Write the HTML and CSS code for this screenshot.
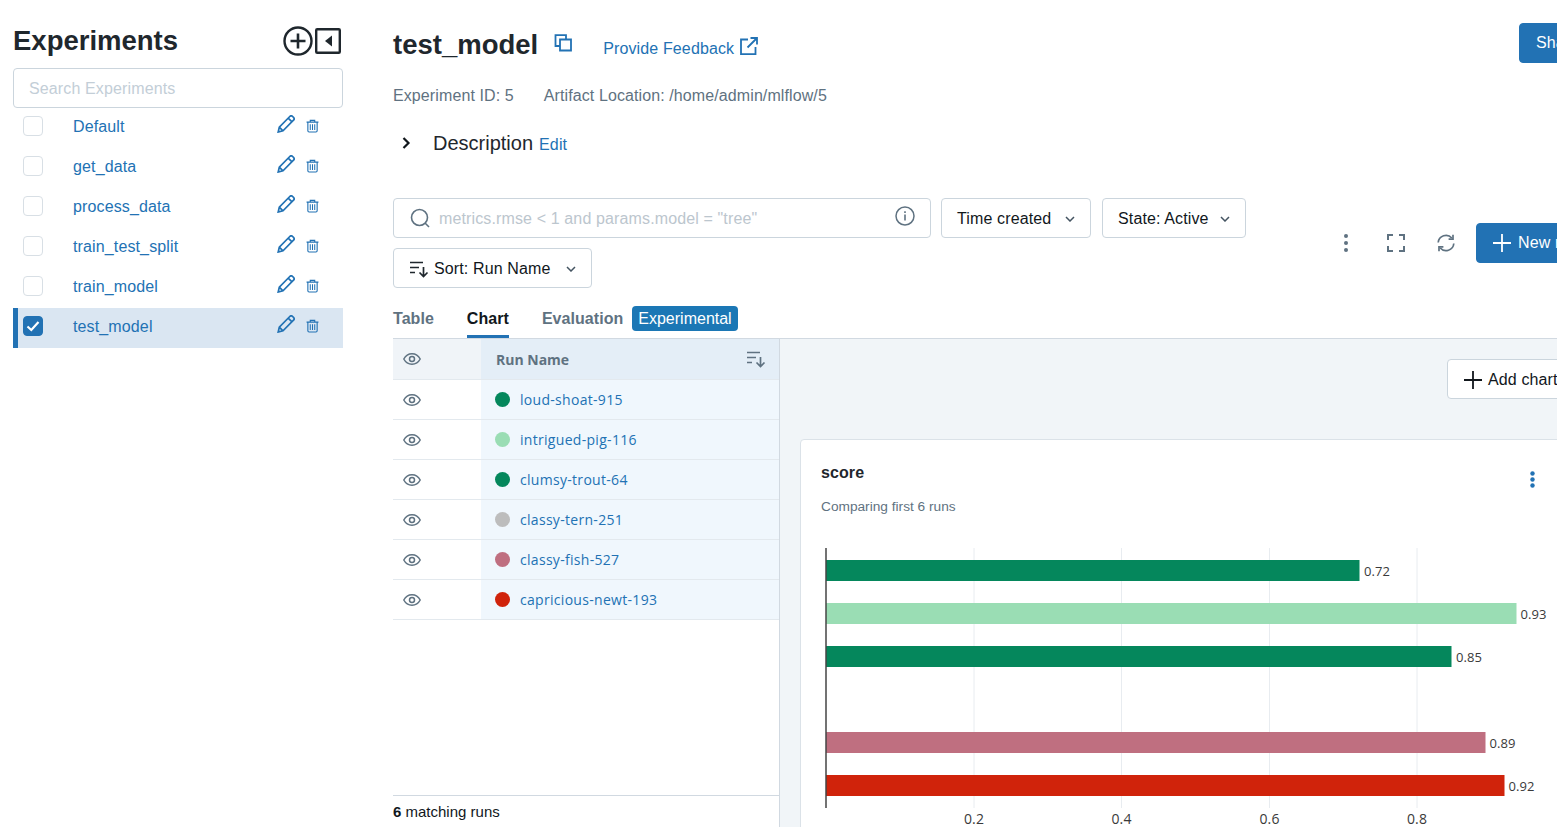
FILE: index.html
```html
<!DOCTYPE html>
<html lang="en">
  <head>
    <meta charset="UTF-8" />
    <meta name="viewport" content="width=device-width, initial-scale=1.0" />
    <title>test_model - MLflow</title>
    <link rel="stylesheet" href="styles.css">
  </head>
  <body>
    <svg class="sprites" width="0" height="0">
      <symbol id="pencil" viewBox="0 0 18 18"><path d="M12.8 1.5a2 2 0 0 1 2.800 0l.9.9a2 2 0 0 1 0 2.800L6 15.800 1.200 17l1.100-4.900zM11.200 3.200l3.800 3.700M2.300 12.200l3.700 3.600" fill="none" stroke="currentColor" stroke-width="1.700"/></symbol>
      <symbol id="trash" viewBox="0 0 14 14"><path d="M.6 2.8h12.8M4.6 2.6V.9h4.8v1.7M2 2.8v9.3a1.3 1.3 0 0 0 1.3 1.3h7.4a1.3 1.3 0 0 0 1.3-1.3V2.8" fill="none" stroke="currentColor" stroke-width="1.2"/><path d="M4.6 5v6.4M7 5v6.4M9.4 5v6.4" stroke="currentColor" stroke-width="1.1"/></symbol>
      <symbol id="eye" viewBox="0 0 18 12"><path d="M.8 6C2.6 2.6 5.500.8 9 .8s6.400 1.800 8.200 5.200c-1.800 3.400-4.700 5.200-8.200 5.200S2.600 9.400.8 6z" fill="none" stroke="currentColor" stroke-width="1.500"/><circle cx="9" cy="6" r="2.500" fill="none" stroke="currentColor" stroke-width="1.500"/></symbol>
      <symbol id="sort" viewBox="0 0 20 18"><path d="M1 2.500h13M1 7.500h9M1 12.500h5M14.500 7v9.500M10.500 12.500l4 4 4-4" fill="none" stroke="currentColor" stroke-width="1.700"/></symbol>
      <symbol id="chevron" viewBox="0 0 10 6"><path d="M1 1l4 4 4-4" fill="none" stroke="currentColor" stroke-width="1.500"/></symbol>
      <symbol id="plus" viewBox="0 0 18 18"><path d="M9 0v18M0 9h18" stroke="currentColor" stroke-width="1.800"/></symbol>
    </svg>

    <aside class="sidebar">
      <div class="sidebar-head">
        <h1 class="sidebar-title">Experiments</h1>
        <div class="sidebar-tools">
          <svg class="tool-icon" width="30" height="30" viewBox="0 0 30 30"><circle cx="15" cy="15" r="13.500" fill="none" stroke="currentColor" stroke-width="2.400"/><path d="M15 7.500v15M7.500 15h15" stroke="currentColor" stroke-width="2.600"/></svg>
          <svg class="tool-icon" width="26" height="26" viewBox="0 0 26 26"><rect x="1.200" y="1.200" width="23.600" height="23.600" rx="1" fill="none" stroke="currentColor" stroke-width="2.400"/><path d="M17 7.500v11L10 13z" fill="currentColor"/></svg>
        </div>
      </div>
      <input class="sidebar-search" type="text" placeholder="Search Experiments">
      <ul class="experiments">
        <li class="experiment">
          <span class="check"></span><a class="experiment-name">Default</a>
          <svg class="pencil"><use href="#pencil"/></svg><svg class="trash"><use href="#trash"/></svg>
        </li>
        <li class="experiment">
          <span class="check"></span><a class="experiment-name">get_data</a>
          <svg class="pencil"><use href="#pencil"/></svg><svg class="trash"><use href="#trash"/></svg>
        </li>
        <li class="experiment">
          <span class="check"></span><a class="experiment-name">process_data</a>
          <svg class="pencil"><use href="#pencil"/></svg><svg class="trash"><use href="#trash"/></svg>
        </li>
        <li class="experiment">
          <span class="check"></span><a class="experiment-name">train_test_split</a>
          <svg class="pencil"><use href="#pencil"/></svg><svg class="trash"><use href="#trash"/></svg>
        </li>
        <li class="experiment">
          <span class="check"></span><a class="experiment-name">train_model</a>
          <svg class="pencil"><use href="#pencil"/></svg><svg class="trash"><use href="#trash"/></svg>
        </li>
        <li class="experiment selected">
          <span class="check checked"><svg width="14" height="12" viewBox="0 0 14 12"><path d="M1.500 6.500l3.800 3.500 7.200-8" fill="none" stroke="#fff" stroke-width="2.200"/></svg></span><a class="experiment-name">test_model</a>
          <svg class="pencil"><use href="#pencil"/></svg><svg class="trash"><use href="#trash"/></svg>
        </li>
      </ul>
    </aside>

    <main class="main">
      <header class="page-head">
        <h2 class="page-title">test_model</h2>
        <svg class="copy-icon" width="18" height="18" viewBox="0 0 18 18"><path d="M6 5.500h11v11H6z M12 5V1.200H1.500V12H6" fill="none" stroke="currentColor" stroke-width="1.800"/></svg>
        <a class="feedback">Provide Feedback</a>
        <svg class="external-icon" width="18" height="18" viewBox="0 0 18 18"><path d="M8 2.500H1v14.600h14.500V10M10.500 1H17v6.500M17 1L7.500 10.500" fill="none" stroke="currentColor" stroke-width="1.800"/></svg>
        <button class="primary share">Share</button>
      </header>

      <div class="meta">
        <span>Experiment ID: 5</span>
        <span>Artifact Location: /home/admin/mlflow/5</span>
      </div>

      <div class="description">
        <svg class="desc-chevron" width="9" height="12" viewBox="0 0 9 12"><path d="M1.500 1l5 5-5 5" fill="none" stroke="currentColor" stroke-width="2.200"/></svg>
        <span class="desc-label">Description</span>
        <a class="desc-edit">Edit</a>
      </div>

      <section class="toolbar">
        <div class="filters">
          <div class="run-search">
            <svg class="search-icon" width="20" height="20" viewBox="0 0 20 20"><circle cx="9.500" cy="9.500" r="8" fill="none" stroke="currentColor" stroke-width="1.600"/><path d="M15 15l4 4" stroke="currentColor" stroke-width="1.600"/></svg>
            <span class="run-search-text">metrics.rmse &lt; 1 and params.model = "tree"</span>
            <svg class="info-icon" width="20" height="20" viewBox="0 0 20 20"><circle cx="10" cy="10" r="9" fill="none" stroke="currentColor" stroke-width="1.500"/><path d="M10 8.500v6M10 5.200v1.800" stroke="currentColor" stroke-width="1.600"/></svg>
          </div>
          <button class="select time-select">Time created<svg class="chevron"><use href="#chevron"/></svg></button>
          <button class="select state-select">State: Active<svg class="chevron"><use href="#chevron"/></svg></button>
          <button class="select sort-select"><svg class="sort-icon dark"><use href="#sort"/></svg>Sort: Run Name<svg class="chevron"><use href="#chevron"/></svg></button>
        </div>
        <div class="view-tools">
          <svg class="kebab" width="4" height="18" viewBox="0 0 4 18"><circle cx="2" cy="2" r="2"/><circle cx="2" cy="9" r="2"/><circle cx="2" cy="16" r="2"/></svg>
          <svg class="view-icon" width="18" height="18" viewBox="0 0 18 18"><path d="M6 1H1v5M12 1h5v5M6 17H1v-5M12 17h5v-5" fill="none" stroke="currentColor" stroke-width="2"/></svg>
          <svg class="view-icon" width="18" height="18" viewBox="0 0 18 18"><path d="M1.200 8.500A7.800 7.800 0 0 1 14.800 4M16.800 9.500A7.800 7.800 0 0 1 3.200 14" fill="none" stroke="currentColor" stroke-width="1.700"/><path d="M16 .8v4.400h-4.400M2 17.200v-4.400h4.400" fill="none" stroke="currentColor" stroke-width="1.700"/></svg>
          <button class="primary new-run"><svg class="plus"><use href="#plus"/></svg>New run</button>
        </div>
      </section>

      <nav class="tabs">
        <a class="tab">Table</a>
        <a class="tab active">Chart</a>
        <a class="tab">Evaluation</a>
        <span class="badge">Experimental</span>
      </nav>

      <section class="compare">
        <div class="runs">
          <div class="run-row run-head">
            <div class="eye-cell"><svg class="eye"><use href="#eye"/></svg></div>
            <div class="name-cell">
              <span class="run-head-label">Run Name</span>
              <svg class="sort-icon"><use href="#sort"/></svg>
            </div>
          </div>
          <div class="run-row">
            <div class="eye-cell"><svg class="eye"><use href="#eye"/></svg></div>
            <div class="name-cell"><span class="dot dot-green"></span><a class="run-link">loud-shoat-915</a></div>
          </div>
          <div class="run-row">
            <div class="eye-cell"><svg class="eye"><use href="#eye"/></svg></div>
            <div class="name-cell"><span class="dot dot-mint"></span><a class="run-link">intrigued-pig-116</a></div>
          </div>
          <div class="run-row">
            <div class="eye-cell"><svg class="eye"><use href="#eye"/></svg></div>
            <div class="name-cell"><span class="dot dot-green"></span><a class="run-link">clumsy-trout-64</a></div>
          </div>
          <div class="run-row">
            <div class="eye-cell"><svg class="eye"><use href="#eye"/></svg></div>
            <div class="name-cell"><span class="dot dot-grey"></span><a class="run-link">classy-tern-251</a></div>
          </div>
          <div class="run-row">
            <div class="eye-cell"><svg class="eye"><use href="#eye"/></svg></div>
            <div class="name-cell"><span class="dot dot-rose"></span><a class="run-link">classy-fish-527</a></div>
          </div>
          <div class="run-row">
            <div class="eye-cell"><svg class="eye"><use href="#eye"/></svg></div>
            <div class="name-cell"><span class="dot dot-red"></span><a class="run-link">capricious-newt-193</a></div>
          </div>
          <div class="runs-foot"><b>6</b> matching runs</div>
        </div>

        <div class="charts">
          <div class="charts-bar">
            <button class="select add-chart"><svg class="plus"><use href="#plus"/></svg>Add chart</button>
          </div>
          <article class="card">
            <div class="card-head">
              <h3 class="card-title">score</h3>
              <svg class="card-kebab" width="5" height="17" viewBox="0 0 5 17"><circle cx="2.500" cy="2.500" r="2.200"/><circle cx="2.500" cy="8.500" r="2.200"/><circle cx="2.500" cy="14.500" r="2.200"/></svg>
            </div>
            <p class="card-note">Comparing first 6 runs</p>
            <svg class="plot" width="760" height="300" viewBox="0 0 760 300">
              <g class="grid">
                <path d="M153 8v260M300.500 8v260M448.500 8v260M596 8v260"/>
              </g>
              <rect x="5" y="20" width="533.500" height="21" fill="#05875c"/>
              <rect x="5" y="63" width="690.500" height="21" fill="#9addb4"/>
              <rect x="5" y="106" width="625.500" height="21" fill="#05875c"/>
              <rect x="5" y="192" width="659.500" height="21" fill="#bf6f80"/>
              <rect x="5" y="235" width="678.500" height="21" fill="#d0230b"/>
              <path class="axis" d="M5 8v260"/>
              <g class="bar-labels">
                <text x="543" y="36">0.72</text>
                <text x="699.500" y="79">0.93</text>
                <text x="635" y="122">0.85</text>
                <text x="668.500" y="208">0.89</text>
                <text x="687.500" y="251">0.92</text>
              </g>
              <g class="tick-labels">
                <text x="153" y="284">0.2</text>
                <text x="300.500" y="284">0.4</text>
                <text x="448.500" y="284">0.6</text>
                <text x="596" y="284">0.8</text>
              </g>
            </svg>
          </article>
        </div>
      </section>
    </main>
  </body>
</html>
```

FILE: styles.css
```css
* {
  box-sizing: border-box;
}

html {
  overflow: hidden;
}

body {
  margin: 0;
  height: 827px;
  overflow: hidden;
  display: flex;
  background: #fff;
  font-family: 'Liberation Sans', Arial, sans-serif;
  font-size: 16px;
  letter-spacing: 0.13px;
  color: #11171c;
}

a {
  color: #2272b4;
  text-decoration: none;
}

button {
  font: inherit;
  letter-spacing: inherit;
  color: inherit;
  white-space: nowrap;
}

.sprites {
  position: absolute;
}

/* sidebar */
.sidebar {
  flex: none;
  width: 330px;
  margin-left: 13px;
  margin-right: 50px;
  padding-top: 25px;
}
.sidebar-head {
  display: flex;
  align-items: center;
  justify-content: space-between;
  height: 32px;
  margin-bottom: 11px;
  padding-right: 2px;
}
.sidebar-title {
  margin: 0;
  font-size: 27.5px;
  font-weight: bold;
  letter-spacing: 0;
  color: #1f272d;
}
.sidebar-tools {
  display: flex;
  align-items: center;
  gap: 2px;
  color: #1f272d;
}
.sidebar-search {
  display: block;
  width: 100%;
  height: 40px;
  padding: 2px 15px 0;
  border: 1px solid #cbd5dd;
  border-radius: 4px;
  font: inherit;
  letter-spacing: inherit;
  outline: none;
}
.sidebar-search::placeholder {
  color: #c3ced7;
}
.experiments {
  margin: 0;
  padding: 0;
  list-style-type: none;
}
.experiment {
  display: flex;
  align-items: center;
  height: 40px;
  padding: 0 24px 0 10px;
  color: #2272b4;
}
.experiment.selected {
  background: #dae6f2;
  border-left: 5px solid #2272b4;
  padding-left: 5px;
}
.check {
  flex: none;
  display: flex;
  align-items: center;
  justify-content: center;
  width: 20px;
  height: 20px;
  margin-right: 30px;
  margin-top: -4px;
  border: 1px solid #d8dfe5;
  border-radius: 4px;
  background: #fff;
}
.check.checked {
  background: #2272b4;
  border-color: #2272b4;
}
.experiment-name {
  flex: 1;
  margin-top: -2px;
}
.pencil {
  width: 18px;
  height: 18px;
  margin-right: 11px;
  margin-top: -9px;
}
.trash {
  width: 13px;
  height: 14px;
  margin-top: -4px;
}

/* page head */
.main {
  flex: none;
  width: 1207px;
  height: 827px;
  display: flex;
  flex-direction: column;
}
.page-head {
  display: flex;
  align-items: center;
  height: 40px;
  margin-top: 23px;
}
.page-title {
  margin: 0 16px 0 0;
  font-size: 27.5px;
  font-weight: bold;
  letter-spacing: 0;
  position: relative;
  top: 2px;
  color: #1f272d;
}
.copy-icon {
  margin-right: 31px;
  margin-top: -1px;
  color: #2272b4;
}
.feedback {
  margin-right: 6px;
  margin-top: 11px;
}
.external-icon {
  margin-top: 5px;
  color: #2272b4;
}
.primary {
  height: 40px;
  border: 1px solid #2272b4;
  border-radius: 4px;
  background: #2272b4;
  color: #fff;
}
.share {
  width: 81px;
  margin-left: auto;
  padding: 0 16px;
  text-align: left;
}
.meta {
  display: flex;
  gap: 30px;
  margin-top: 23px;
  line-height: 20px;
  letter-spacing: 0.1px;
  color: #5f7281;
}
.description {
  display: flex;
  align-items: center;
  height: 24px;
  margin-top: 25px;
  margin-bottom: 1px;
}
.desc-chevron {
  margin-left: 9px;
  margin-right: 22px;
}
.desc-label {
  font-size: 20px;
  letter-spacing: 0;
  margin-right: 6px;
  color: #1f272d;
}
.desc-edit {
  margin-top: 3px;
}

/* filters */
.toolbar {
  display: flex;
  align-items: center;
  justify-content: space-between;
  margin-top: 42px;
}
.filters {
  display: flex;
  flex-wrap: wrap;
  gap: 10px;
  width: 870px;
}
.run-search {
  display: flex;
  align-items: center;
  width: 538px;
  height: 40px;
  padding: 0 15px 0 16px;
  border: 1px solid #cbd5dd;
  border-radius: 4px;
}
.search-icon {
  flex: none;
  margin-right: 9px;
  color: #5f7281;
}
.run-search-text {
  flex: 1;
  margin-top: 1px;
  color: #bcc6ce;
}
.info-icon {
  color: #5f7281;
  margin-top: -4px;
}
.select {
  display: flex;
  align-items: center;
  height: 40px;
  padding: 1px 15px 0;
  border: 1px solid #cbd5dd;
  border-radius: 4px;
  background: #fff;
}
.time-select {
  width: 150px;
}
.state-select {
  width: 144px;
  margin-left: 1px;
}
.sort-select {
  width: 199px;
}
.chevron {
  width: 10px;
  height: 6px;
  margin-left: auto;
  color: #445461;
}
.sort-icon {
  flex: none;
  width: 20px;
  height: 18px;
  color: #5f7281;
}
.sort-icon.dark {
  color: #1f272d;
  margin-right: 5px;
}
.view-tools {
  flex: none;
  display: flex;
  align-items: center;
}
.kebab {
  flex: none;
  fill: #5f7281;
}
.view-icon {
  flex: none;
  margin-left: 39px;
  color: #5f7281;
}
.view-icon + .view-icon {
  margin-left: 32px;
}
.new-run {
  flex: none;
  display: flex;
  align-items: center;
  width: 124px;
  margin-left: 21px;
  padding: 0 16px;
}
.plus {
  flex: none;
  width: 18px;
  height: 18px;
  margin-right: 7px;
}

/* tabs */
.tabs {
  flex: none;
  display: flex;
  align-items: center;
  height: 33px;
  margin-top: 18px;
  border-bottom: 1px solid #d1d9e1;
  font-weight: bold;
  letter-spacing: 0.05px;
  color: #5f7281;
}
.tab {
  height: 32px;
  line-height: 24px;
  margin-right: 33px;
  color: #5f7281;
  padding-top: 1px;
}
.tab.active {
  color: #11171c;
  border-bottom: 3px solid #2272b4;
}
.tab:nth-child(3) {
  margin-right: 9px;
}
.badge {
  height: 25px;
  line-height: 25px;
  padding: 0 6px;
  margin-top: -7px;
  border-radius: 4px;
  background: #1b77b5;
  color: #fff;
  font-weight: normal;
  letter-spacing: 0;
}

/* runs */
.compare {
  flex: 1;
  min-height: 0;
  display: flex;
  overflow: hidden;
}
.runs {
  flex: none;
  width: 387px;
  display: flex;
  flex-direction: column;
  border-right: 1px solid #d1d9e1;
  font-family: 'Open Sans', sans-serif;
  font-size: 14px;
  letter-spacing: 0.3px;
}
.run-row {
  display: flex;
  height: 40px;
  flex: none;
  border-bottom: 1px solid #e3e9ee;
}
.run-row.run-head {
  height: 41px;
}
.eye-cell {
  flex: none;
  width: 88px;
  display: flex;
  align-items: center;
  padding-left: 10px;
}
.eye {
  width: 18px;
  height: 12px;
  color: #5f7281;
}
.name-cell {
  flex: 1;
  display: flex;
  align-items: center;
  padding: 0 14px;
  background: #f0f7fd;
}
.run-head .eye-cell {
  background: #f0f4f8;
}
.run-head .name-cell {
  background: #e4eef7;
  justify-content: space-between;
  padding-right: 13px;
}
.run-head-label {
  margin-left: 1px;
  font-weight: 700;
  letter-spacing: 0;
  color: #5f7281;
}
.dot {
  width: 15px;
  height: 15px;
  margin-right: 10px;
  border-radius: 50%;
}
.dot-green { background: #05875c; }
.dot-mint { background: #9addb4; }
.dot-grey { background: #bdbdbd; }
.dot-rose { background: #bf6f80; }
.dot-red { background: #d0230b; }
.runs-foot {
  margin-top: auto;
  flex: none;
  height: 32px;
  line-height: 32px;
  border-top: 1px solid #d1d9e1;
  font-family: 'Liberation Sans', Arial, sans-serif;
  font-size: 15px;
  letter-spacing: 0;
}

/* chart */
.charts {
  flex: 1;
  min-width: 0;
  padding: 20px;
  background: #f1f5f8;
  overflow: hidden;
}
.charts-bar {
  display: flex;
  justify-content: flex-end;
  margin-bottom: 40px;
}
.add-chart {
  width: 133px;
  padding-left: 16px;
}
.add-chart .plus {
  margin-right: 6px;
}
.card {
  height: 500px;
  padding: 21px 20px 20px;
  background: #fff;
  border: 1px solid #dbe2e8;
  border-radius: 4px;
}
.card-head {
  display: flex;
  align-items: flex-start;
  justify-content: space-between;
  height: 24px;
  padding-right: 24px;
}
.card-title {
  margin: 0;
  font-size: 16px;
  line-height: 24px;
  font-weight: bold;
  letter-spacing: 0.1px;
  color: #1f272d;
}
.card-kebab {
  margin-top: 10px;
  fill: #2272b4;
}
.card-note {
  margin: 12px 0 0;
  font-size: 13.700px;
  line-height: 20px;
  letter-spacing: 0;
  color: #5f7281;
}
.plot {
  display: block;
  margin-top: 23px;
  overflow: visible;
  font-family: 'Open Sans', sans-serif;
  letter-spacing: 0.1px;
}
.grid path {
  stroke: #e8ecf0;
  stroke-width: 1;
  fill: none;
}
.axis {
  stroke: #444;
  stroke-width: 1.500;
  fill: none;
}
.bar-labels {
  font-size: 13px;
  fill: #3a3a3a;
}
.tick-labels {
  font-size: 14px;
  fill: #3a3a3a;
  text-anchor: middle;
}
```
